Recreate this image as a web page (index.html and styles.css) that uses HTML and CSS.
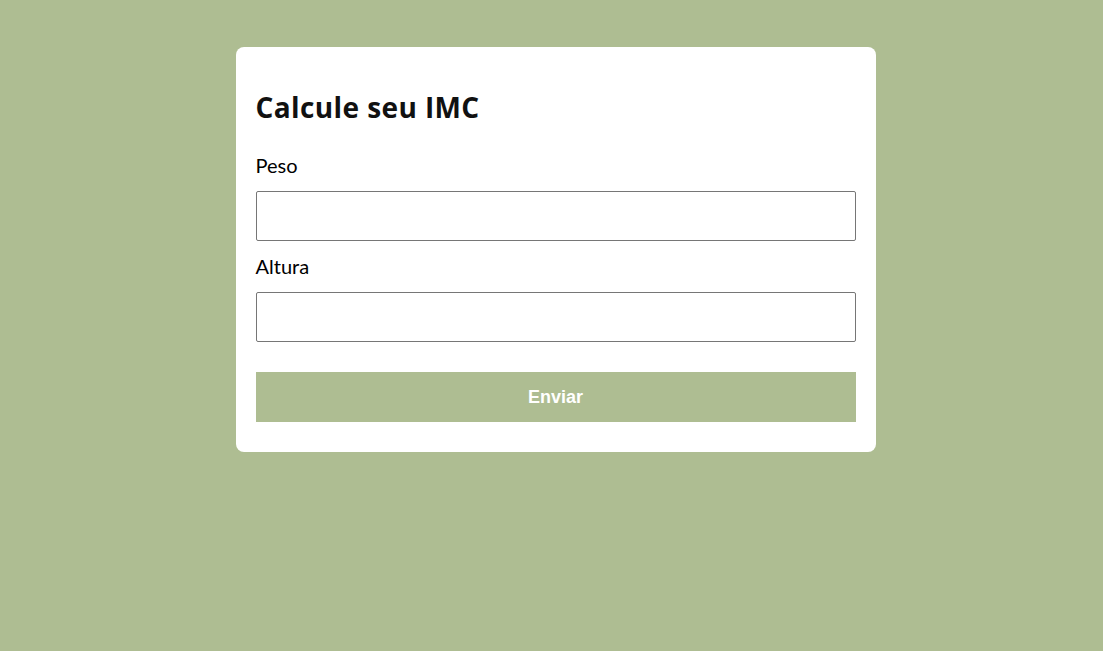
FILE: index.html
```html
<!DOCTYPE html>
<html lang="pt-BR">
<head>
<meta charset="utf-8">
<title>Calcule seu IMC</title>
<link rel="stylesheet" href="styles.css">
</head>
<body>
<main class="card">
  <h1 class="title">Calcule seu IMC</h1>
  <form class="form">
    <label class="label" for="peso">Peso</label>
    <input class="field" id="peso" type="text">
    <label class="label" for="altura">Altura</label>
    <input class="field" id="altura" type="text">
    <button class="submit" type="button">Enviar</button>
  </form>
</main>
</body>
</html>
```
FILE: styles.css
```css
* { box-sizing: border-box; }

body {
  margin: 0 0 0 8px;
  background: #aebd92;
  font-family: Lato, "Open Sans", sans-serif;
  color: #000;
}

.card {
  width: 640px;
  margin: 47px auto 0;
  padding: 43px 20px 30px;
  background: #fff;
  border-radius: 8px;
}

.title {
  margin: 0 0 29px;
  font-family: "Open Sans", Lato, sans-serif;
  font-size: 28px;
  letter-spacing: 0.4px;
  line-height: 34px;
  font-weight: 700;
  color: #111;
}

.form {
  display: flex;
  flex-direction: column;
}

.label {
  display: block;
  font-size: 20px;
  line-height: 24px;
  margin-bottom: 14px;
}

.field {
  width: 100%;
  height: 50px;
  margin: 0 0 13px;
  border: 1px solid #767676;
  border-radius: 2px;
  background: #fff;
  font: inherit;
}

.submit {
  margin-top: 17px;
  height: 50px;
  border: none;
  background: #aebd92;
  color: #fff;
  font-family: "Liberation Sans", Arial, sans-serif;
  font-weight: 700;
  font-size: 18px;
}
```
